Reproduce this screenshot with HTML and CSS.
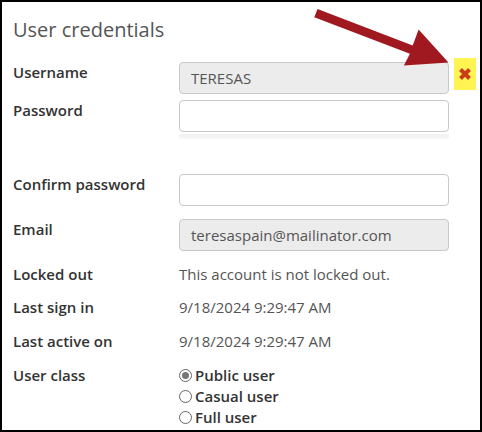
FILE: index.html
```html
<!DOCTYPE html>
<html>
<head>
<meta charset="utf-8">
<link rel="stylesheet" href="styles.css">
</head>
<body>
<div class="panel">
  <h1 class="title">User credentials</h1>
  <div class="form">
    <div class="row">
      <div class="label">Username</div>
      <div class="field"><input class="input disabled" type="text" value="TERESAS" disabled></div>
      <span class="clear-btn" aria-label="Remove">
        <svg width="14" height="14" viewBox="0 0 14 14"><path d="M2.5 2.5L11.5 11.5M11.5 2.5L2.5 11.5" stroke="#c93d1c" stroke-width="4" stroke-linecap="butt"/></svg>
      </span>
    </div>
    <div class="row r-password">
      <div class="label">Password</div>
      <div class="field">
        <input class="input" type="password">
        <div class="meter"></div>
      </div>
    </div>
    <div class="row r-confirm">
      <div class="label">Confirm password</div>
      <div class="field"><input class="input" type="password"></div>
    </div>
    <div class="row r-email">
      <div class="label">Email</div>
      <div class="field"><input class="input disabled" type="text" value="teresaspain@mailinator.com" disabled></div>
    </div>
    <div class="row r-text r-first">
      <div class="label">Locked out</div>
      <div class="value">This account is not locked out.</div>
    </div>
    <div class="row r-text">
      <div class="label">Last sign in</div>
      <div class="value">9/18/2024 9:29:47 AM</div>
    </div>
    <div class="row r-text r-wide">
      <div class="label">Last active on</div>
      <div class="value">9/18/2024 9:29:47 AM</div>
    </div>
    <div class="row r-text r-wide">
      <div class="label">User class</div>
      <div class="radios">
        <label class="radio"><span class="dot checked"></span>Public user</label>
        <label class="radio"><span class="dot"></span>Casual user</label>
        <label class="radio"><span class="dot"></span>Full user</label>
      </div>
    </div>
  </div>
  <svg class="arrow" width="482" height="432" viewBox="0 0 482 432">
    <polygon points="317.5,8.9 412.7,45.4 418.6,29.5 448.5,62.5 403.9,65.6 409.9,53.8 314.3,17.3" fill="#a11920"/>
  </svg>
</div>
</body>
</html>
```
FILE: styles.css
```css
html, body {
  margin: 0;
  padding: 0;
  background: #fff;
}
body {
  font-family: "Open Sans", "Liberation Sans", sans-serif;
}
.panel {
  position: relative;
  width: 482px;
  height: 432px;
  box-sizing: border-box;
  border: 2px solid #000;
  padding: 16px 0 0 11px;
  overflow: hidden;
}
.title {
  margin: 0;
  font-size: 20px;
  line-height: 24px;
  font-weight: 400;
  color: #555;
}
.form {
  margin-top: 20px;
}
.row {
  display: flex;
  align-items: flex-start;
}
.label {
  width: 166px;
  flex: none;
  font-size: 15px;
  line-height: 20px;
  font-weight: 600;
  color: #333;
}
.field {
  width: 270px;
}
.input {
  display: block;
  width: 270px;
  height: 32px;
  box-sizing: border-box;
  border: 1px solid #c9c9c9;
  border-radius: 4px;
  background: #fff;
  padding: 0 11px;
  font-family: "Open Sans", "Liberation Sans", sans-serif;
  font-size: 15px;
  color: #555;
  margin: 0;
}
.input.disabled {
  background: #ececec;
  color: #555;
  -webkit-text-fill-color: #555;
  opacity: 1;
}
.clear-btn {
  display: flex;
  align-items: center;
  justify-content: center;
  width: 22px;
  height: 32px;
  margin: -4px 0 0 5px;
  background: #fff451;
}
.r-password { margin-top: 6px; }
.meter {
  margin-top: 2px;
  height: 5px;
  border-radius: 2px;
  background: linear-gradient(#f1f1f1, #f7f7f7);
}
.r-confirm { margin-top: 35px; }
.r-email { margin-top: 13px; }
.r-text { margin-top: 13px; }
.r-wide { margin-top: 14px; }
.value {
  font-size: 15px;
  line-height: 20px;
  color: #555;
}
.radios {
  display: flex;
  flex-direction: column;
}
.radio {
  display: flex;
  align-items: center;
  gap: 3px;
  font-size: 15px;
  line-height: 21px;
  font-weight: 600;
  color: #333;
}
.dot {
  width: 11px;
  height: 11px;
  border: 1px solid #666;
  border-radius: 50%;
  box-sizing: content-box;
  display: flex;
  align-items: center;
  justify-content: center;
  background: #fff;
}
.dot.checked::after {
  content: "";
  width: 7px;
  height: 7px;
  border-radius: 50%;
  background: #777;
}
.arrow {
  position: absolute;
  left: -2px;
  top: -2px;
  pointer-events: none;
}
```
